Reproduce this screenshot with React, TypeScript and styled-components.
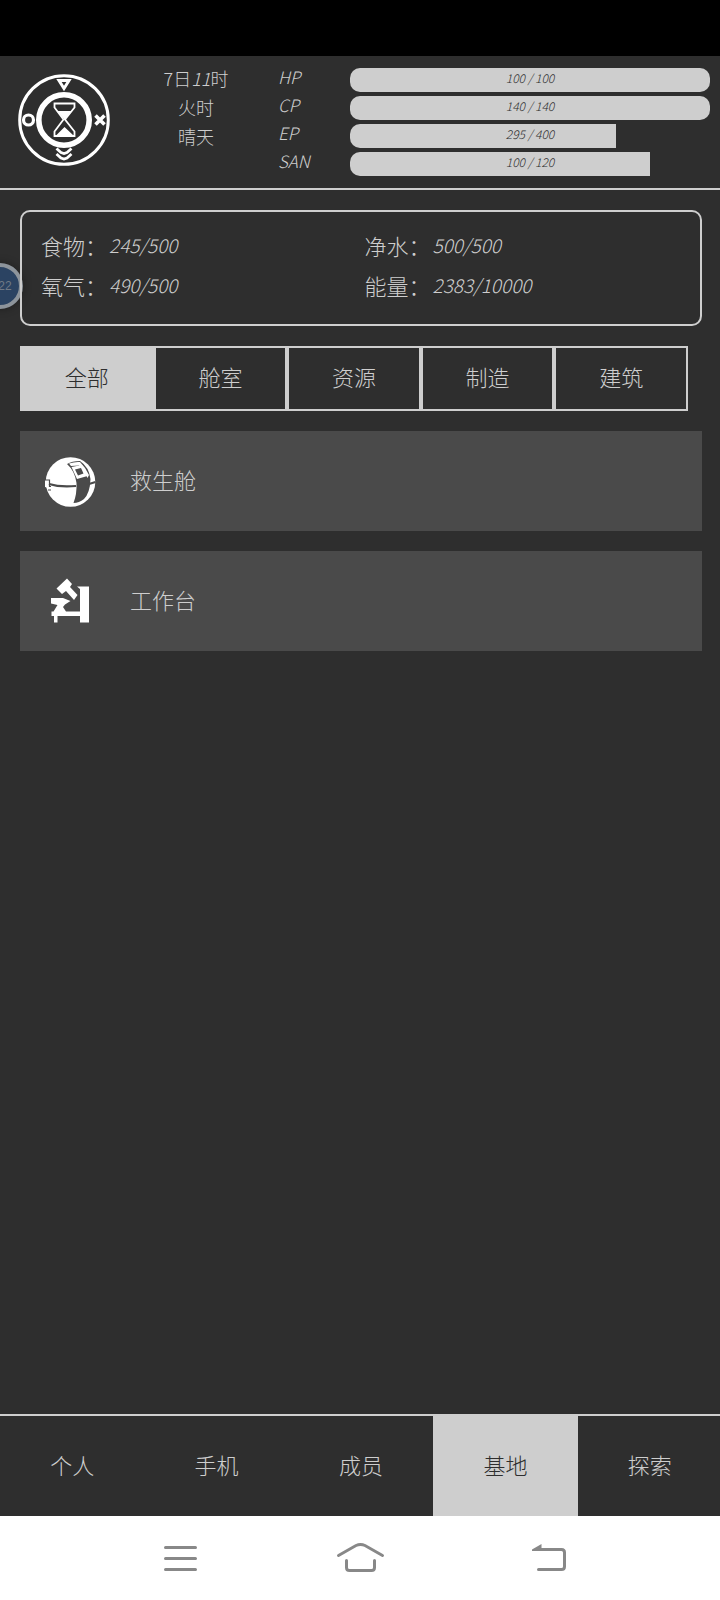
import React from "react";
import styled, { createGlobalStyle } from "styled-components";

const ink = "#cecece";
const paper = "#2e2e2e";
const card = "#4a4a4a";

const GlobalStyle = createGlobalStyle`
  *, *::before, *::after { box-sizing: border-box; }
  body {
    margin: 0;
    background: ${paper};
    color: ${ink};
    font-family: "Noto Sans CJK SC", sans-serif;
    font-weight: 300;
  }
  button { font: inherit; color: inherit; border: 0; padding: 0; background: none; cursor: pointer; }
  dl, dd, ul, p { margin: 0; padding: 0; list-style: none; }
`;

const Screen = styled.div`
  position: relative;
  min-height: 100vh;
  display: flex;
  flex-direction: column;
  overflow: hidden;
`;

const StatusBar = styled.div`
  height: 56px;
  background: #000;
`;

const Header = styled.header`
  display: flex;
  height: 134px;
  padding: 12px 10px 0 18px;
  border-bottom: 2px solid ${ink};
`;

const Emblem = styled.svg`
  flex: none;
  width: 92px;
  height: 92px;
  margin-top: 6px;
`;

const Clock = styled.div`
  flex: none;
  width: 168px;
  padding-left: 4px;
  text-align: center;
  font-size: 18px;
  line-height: 29px;
  margin-top: -4px;
`;

const Stats = styled.dl`
  flex: 1;
  display: flex;
  flex-direction: column;
  gap: 4px;
`;

const Stat = styled.div`
  display: flex;
  height: 24px;
`;

const StatName = styled.dt`
  width: 72px;
  font-size: 17px;
  font-style: italic;
  line-height: 18px;
`;

const Track = styled.dd`
  position: relative;
  flex: 1;
  border-radius: 10px;
  overflow: hidden;
`;

const Fill = styled.div`
  height: 100%;
  background: ${ink};
`;

const TrackText = styled.span`
  position: absolute;
  inset: 0;
  text-align: center;
  color: ${paper};
  font-size: 12px;
  font-style: italic;
  line-height: 20px;
`;

const Main = styled.main`
  position: relative;
  z-index: 1;
  flex: 1;
  display: flex;
  flex-direction: column;
  gap: 20px;
  padding: 20px 18px 20px 20px;
`;

const Resources = styled.dl`
  display: grid;
  grid-template-columns: 1fr 1fr;
  padding: 13px 12px 19px 19px;
  border: 2px solid ${ink};
  border-radius: 10px;
`;

const Resource = styled.div`
  display: flex;
  height: 40px;
  font-size: 22px;
  line-height: 40px;
`;

const Amount = styled.dd`
  padding-left: 2px;
  font-size: 19px;
  font-style: italic;
`;

const Tabs = styled.div`
  display: flex;
  height: 65px;
  margin-right: 14px;
`;

const Tab = styled.button<{ $active?: boolean }>`
  && {
    flex: 1;
    padding-bottom: 6px;
    border: 2px solid ${ink};
    font-size: 22px;
    background: ${(p) => (p.$active ? ink : "transparent")};
    color: ${(p) => (p.$active ? paper : ink)};
  }
`;

const Facilities = styled.ul`
  display: flex;
  flex-direction: column;
  gap: 20px;
`;

const Facility = styled.button`
  && {
    display: flex;
    align-items: center;
    gap: 30px;
    width: 100%;
    height: 100px;
    padding: 0 20px;
    background: ${card};
    font-size: 22px;
    text-align: left;
  }
`;

const FacilityIcon = styled.svg`
  flex: none;
  width: 60px;
  height: 60px;
`;

const FacilityName = styled.span`
  padding-bottom: 5px;
`;

const BottomNav = styled.nav`
  display: flex;
  width: calc(100% + 2px);
  height: 102px;
  border-top: 2px solid ${ink};
`;

const NavItem = styled.button<{ $active?: boolean }>`
  && {
    flex: 1;
    padding-bottom: 5px;
    font-size: 22px;
    background: ${(p) => (p.$active ? ink : "transparent")};
    color: ${(p) => (p.$active ? paper : ink)};
  }
`;

const SystemBar = styled.div`
  display: flex;
  justify-content: space-between;
  align-items: center;
  height: 84px;
  padding: 0 20%;
  background: #fff;
  svg { display: block; width: 60px; height: 36px; }
`;

const FloatingBall = styled.button`
  && {
    position: absolute;
    top: 263px;
    left: -23px;
    width: 46px;
    height: 46px;
    padding-left: 10px;
    border: 4px solid #8d949b;
    border-radius: 50%;
    background: #2b4362;
    box-shadow: 0 0 8px rgba(0, 0, 0, 0.35);
    color: #707a86;
    font: 12px "Liberation Sans", sans-serif;
  }
`;

const stats = [
  { name: "HP", value: 100, max: 100 },
  { name: "CP", value: 140, max: 140 },
  { name: "EP", value: 295, max: 400 },
  { name: "SAN", value: 100, max: 120 },
];

const resources = [
  { name: "食物", amount: "245/500" },
  { name: "净水", amount: "500/500" },
  { name: "氧气", amount: "490/500" },
  { name: "能量", amount: "2383/10000" },
];

const categories = ["全部", "舱室", "资源", "制造", "建筑"];
const pages = ["个人", "手机", "成员", "基地", "探索"];

const HourglassEmblem = () => (
  <Emblem viewBox="0 0 92 92" fill="none" stroke="#fff" aria-hidden="true">
    <circle cx="46" cy="46" r="44.3" strokeWidth="3" />
    <circle cx="46" cy="46" r="25.2" strokeWidth="5.6" />
    <circle cx="10.5" cy="46" r="5" strokeWidth="3.2" />
    <path d="M77.5 41.5L86.5 50.5M86.5 41.5L77.5 50.5" strokeWidth="3.6" />
    <path d="M41 6.500L51 6.500L46 14.500Z" strokeWidth="3" />
    <path d="M38.500 74.500L43 78.500L46 79.500L49 78.500L53.500 74.500M38.500 80L43 84L46 85L49 84L53.500 80" strokeWidth="2.800" />
    <path d="M36.500 29.500H56.500V33.500L47 45.500L56.500 57.500V62H36.500V57.500L45.500 45.500L36.500 33.500Z" strokeWidth="1.8" />
    <path d="M39 37H54L46.500 45.500ZM38 61.500L46.500 53L55.500 61.500Z" fill="#fff" stroke="none" />
  </Emblem>
);

const PodIcon = () => (
  <FacilityIcon viewBox="0 0 60 60" aria-hidden="true">
    <circle cx="30.500" cy="31" r="24.800" fill="#fff" />
    <path d="M5 29.500H9V33H12V35H9V37L5 36Z" fill="#fff" />
    <path d="M9 33Q20 36.500 36 35" fill="none" stroke={card} strokeWidth="2.200" />
    <path d="M5.500 29H9.500V35.500H11M8 39H11" fill="none" stroke={card} strokeWidth="1.200" />
    <path d="M27 13Q32 10 40 10Q49 16 50.500 28Q50 42 44 48Q39 52 33.500 52Q37 43 36.500 32Q35 20 27 13Z" fill={card} />
    <path d="M29 12.500Q35 10.500 40 11Q46 17 49 24L47.500 27Q44 19 39 14.500L31 15Z" fill="#fff" />
    <path d="M31.500 16L42 14L47.500 25L37 28Z" fill="#fff" />
    <path d="M35 18.500L41 17L43.500 22.500L38 24.500Z" fill={card} />
    <path d="M49 33L55.500 31" stroke={card} strokeWidth="2" />
  </FacilityIcon>
);

const WorkbenchIcon = () => (
  <FacilityIcon viewBox="0 0 60 60" fill="#fff" aria-hidden="true">
    <path d="M27 7.500L32 13L30 16L37.500 24L34 29L26 20L22 23L16.500 17.500Z" />
    <path d="M37 15.500H49V51.500H40V45H17.500V51.500H14V45H11.500V40.500H13.500L17.500 34L11 32.500V27H23L30.500 30L25 33.500L23 36L26 40.500H40V18Z" />
  </FacilityIcon>
);

export default function App() {
  return (
    <>
      <GlobalStyle />
      <Screen>
        <StatusBar />
        <Header>
          <HourglassEmblem />
          <Clock>
            <p>7日<i>11</i>时</p>
            <p>火时</p>
            <p>晴天</p>
          </Clock>
          <Stats>
            {stats.map((s) => (
              <Stat key={s.name}>
                <StatName>{s.name}</StatName>
                <Track>
                  <Fill style={{ width: `${(s.value / s.max) * 100}%` }} />
                  <TrackText>{`${s.value} / ${s.max}`}</TrackText>
                </Track>
              </Stat>
            ))}
          </Stats>
        </Header>
        <Main>
          <Resources>
            {resources.map((r) => (
              <Resource key={r.name}>
                <dt>{r.name}：</dt>
                <Amount>{r.amount}</Amount>
              </Resource>
            ))}
          </Resources>
          <Tabs>
            {categories.map((c, i) => (
              <Tab key={c} $active={i === 0}>{c}</Tab>
            ))}
          </Tabs>
          <Facilities>
            <li><Facility><PodIcon /><FacilityName>救生舱</FacilityName></Facility></li>
            <li><Facility><WorkbenchIcon /><FacilityName>工作台</FacilityName></Facility></li>
          </Facilities>
        </Main>
        <BottomNav>
          {pages.map((p) => (
            <NavItem key={p} $active={p === "基地"}>{p}</NavItem>
          ))}
        </BottomNav>
        <SystemBar>
          <button aria-label="菜单">
            <svg viewBox="144 1540 60 36" fill="none" stroke="#888" strokeWidth="3" strokeLinecap="round">
              <path d="M165.500 1547.500H195.500M165.500 1558.500H195.500M165.500 1569.500H195.500" />
            </svg>
          </button>
          <button aria-label="主页">
            <svg viewBox="330 1540 60 36" fill="none" stroke="#888" strokeWidth="3" strokeLinecap="round">
              <path d="M338.500 1555.500L356 1545.500Q360.500 1543.500 365 1545.500L382.500 1555.500" />
              <path d="M346.500 1560.500V1567.500Q346.500 1570.500 349.500 1570.500H371.500Q374.500 1570.500 374.500 1567.500V1560.500" />
            </svg>
          </button>
          <button aria-label="返回">
            <svg viewBox="516 1540 60 36" fill="none" stroke="#888" strokeWidth="3" strokeLinecap="round">
              <path d="M538 1549.500H561.500Q564.500 1549.500 564.500 1552.500V1566.500Q564.500 1569.500 561.500 1569.500H538.500" />
              <path d="M532 1549.500L541.500 1544V1551H532Z" fill="#888" stroke="none" />
            </svg>
          </button>
        </SystemBar>
        <FloatingBall>22</FloatingBall>
      </Screen>
    </>
  );
}
